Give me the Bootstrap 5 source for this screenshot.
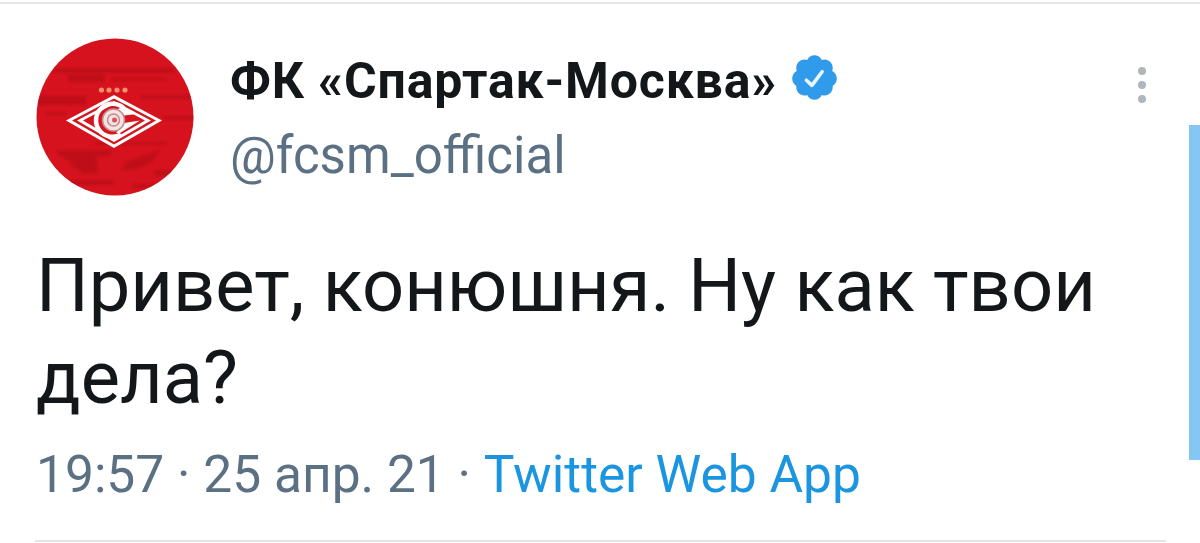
<!doctype html>
<html lang="ru">
<head>
<meta charset="utf-8">
<title>Tweet</title>
<link href="https://cdn.jsdelivr.net/npm/bootstrap@5.3.0/dist/css/bootstrap.min.css" rel="stylesheet">
<style>
html,body{height:543px;overflow:hidden;background:#fff}
body{font-family:Roboto,"Liberation Sans",sans-serif;color:#14171a}
.tweet-page{position:relative;height:543px;padding-top:2px}
.top-rule{height:2px;background:#e6e6e6}
.tweet-wrap{padding:34px 34px 0 36px}
.avatar-svg{width:158px;height:158px;flex:none;display:block}
.head-text{margin-left:36px;padding-top:14px}
.tw-name{font-size:50px;font-weight:700;line-height:58px;letter-spacing:.85px;color:#14171a;white-space:nowrap}
.tw-handle{font-size:51px;line-height:58px;margin-top:17px;color:#5b7083}
.verified{width:51px;height:51px;margin-left:12px;margin-top:-8px;flex:none}
.more-dots{width:10px;margin-top:29px;margin-right:18px}
.more-dots i{display:block;width:8px;height:8px;border-radius:50%;background:#b0b5ba;margin-bottom:6px}
.tw-body{font-size:74px;line-height:92px;margin:44px 0 0 0;color:#14171a}
.tw-meta{font-size:51.500px;line-height:56px;margin-top:23px;color:#5b7083}
.tw-meta a{color:#1b95e0;text-decoration:none}
.bottom-rule{height:2px;background:#e4e4e4;margin:37px 0 0 -1px}
.fake-scroll{position:absolute;right:0;top:125px;width:11px;height:335px;background:#85c6f5}
</style>
</head>
<body>
<div class="tweet-page">
  <div class="top-rule"></div>
  <div class="tweet-wrap">
    <div class="d-flex align-items-start">
      <svg class="avatar-svg" viewBox="0 0 158 158" role="img" aria-label="Спартак">
        <defs>
          <clipPath id="cc"><circle cx="79" cy="79" r="78.500"/></clipPath>
          <filter id="soft" x="-5%" y="-5%" width="110%" height="110%"><feGaussianBlur stdDeviation=".5"/></filter>
          <filter id="softer" x="-5%" y="-5%" width="110%" height="110%"><feGaussianBlur stdDeviation="1.200"/></filter>
        </defs>
        <circle cx="79" cy="79" r="78.500" fill="#d5121e"/>
        <g clip-path="url(#cc)" fill="#b30d17" opacity=".6" filter="url(#softer)">
          <rect x="18" y="30" width="120" height="5"/>
          <rect x="32" y="36" width="36" height="8"/>
          <rect x="75" y="40" width="55" height="3"/>
          <rect x="0" y="58" width="50" height="9"/>
          <rect x="105" y="57" width="53" height="4"/>
          <rect x="10" y="74" width="20" height="3"/>
          <rect x="128" y="78" width="30" height="4"/>
          <rect x="22" y="112" width="52" height="6"/>
          <path d="M20 112 60 112 62 136 46 136Z"/>
          <path d="M90 124 124 112 116 124 98 132 86 132Z"/>
          <rect x="60" y="104" width="70" height="3"/>
          <rect x="34" y="142" width="44" height="5"/>
          <rect x="96" y="146" width="40" height="4"/>
          <rect x="118" y="132" width="40" height="6"/>
        </g>
        <g fill="#f4916a">
          <circle cx="65.500" cy="52" r="2.600"/><circle cx="73" cy="52" r="2.600"/><circle cx="81" cy="52" r="2.600"/><circle cx="89" cy="52" r="2.600"/>
        </g>
        <g filter="url(#soft)">
          <path d="M78 57 126 82.500 78 110 30 82.500Z" fill="#fff"/>
          <path d="M78 60.500 120 82.500 78 106.500 36 82.500Z" fill="#d5121e"/>
          <path d="M78 63 115 82.500 78 104 41 82.500Z" fill="#fff"/>
          <path d="M78 66 109 82.500 78 100.500 47 82.500Z" fill="#d5121e"/>
          <path d="M88 69 101 76 84 78 78 72Z" fill="#fff"/>
          <path d="M88 85 104 82.500 84 95 80 95Z" fill="#fff"/>
          <path d="M88 70.500A16.500 16.500 0 1 0 85 96.500" fill="none" stroke="#fff" stroke-width="4.500"/>
          <circle cx="77.500" cy="82" r="11" fill="#f1e4e4" stroke="#c9898c" stroke-width="1.500"/>
          <circle cx="77.500" cy="82" r="6" fill="none" stroke="#c9898c" stroke-width="1.500"/>
          <circle cx="78.500" cy="82" r="2.500" fill="#d5121e" opacity=".7"/>
        </g>
      </svg>
      <div class="head-text flex-grow-1">
        <div class="tw-name d-flex align-items-center">ФК «Спартак-Москва»
          <svg class="verified" viewBox="0 0 24 24" aria-label="Подтверждённый"><path fill="#2f9bea" d="M22.500 12.500c0-1.580-.875-2.950-2.148-3.600.154-.435.238-.905.238-1.400 0-2.210-1.710-3.998-3.818-3.998-.47 0-.92.084-1.336.25C14.818 2.415 13.510 1.500 12 1.500s-2.816.917-3.437 2.250c-.415-.165-.866-.25-1.336-.25-2.110 0-3.818 1.790-3.818 4 0 .494.083.964.237 1.400-1.272.65-2.147 2.018-2.147 3.600 0 1.495.782 2.798 1.942 3.486-.02.17-.032.34-.032.514 0 2.210 1.708 4 3.818 4 .47 0 .92-.086 1.335-.25.620 1.334 1.926 2.250 3.437 2.250 1.512 0 2.818-.916 3.437-2.250.415.163.865.248 1.336.248 2.110 0 3.818-1.790 3.818-4 0-.174-.012-.344-.033-.513 1.158-.687 1.943-1.990 1.943-3.484z"/><path fill="none" stroke="#eaf6fe" stroke-width="1.700" stroke-linecap="round" stroke-linejoin="round" d="M8.200 13.300 10.800 15.700 15.600 9.300"/></svg>
        </div>
        <div class="tw-handle">@fcsm_official</div>
      </div>
      <div class="more-dots"><i></i><i></i><i></i></div>
    </div>
    <p class="tw-body">Привет, конюшня. Ну как твои<br>дела?</p>
    <div class="tw-meta">19:57 · 25 апр. 21 · <a href="#">Twitter Web App</a></div>
    <div class="bottom-rule"></div>
  </div>
  <div class="fake-scroll"></div>
</div>
<script src="https://cdn.jsdelivr.net/npm/bootstrap@5.3.0/dist/js/bootstrap.bundle.min.js"></script>
</body>
</html>
